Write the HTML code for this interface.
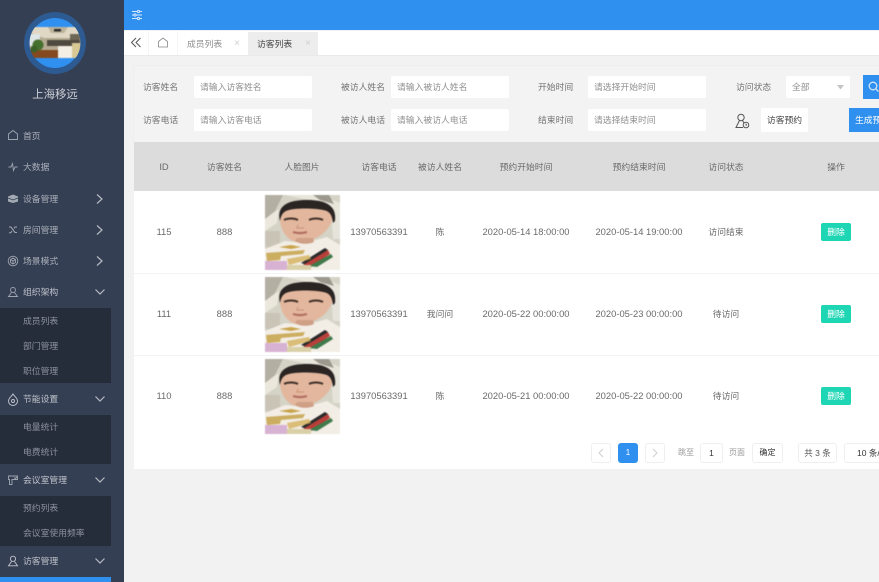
<!DOCTYPE html>
<html lang="zh-CN">
<head>
<meta charset="utf-8">
<title>访客列表</title>
<style>
html,body{margin:0;padding:0}
body{width:879px;height:582px;position:relative;overflow:hidden;background:#f2f2f2;font-family:"Liberation Sans","Noto Sans CJK SC",sans-serif;font-size:8.8px;color:#6a6a6a}
#w{position:absolute;left:0;top:0;width:879px;height:582px;overflow:hidden;filter:blur(.3px)}
.a,.t,.c{position:absolute;white-space:nowrap}
.t{line-height:14px;height:14px;transform:translateY(-7px)}
.c{line-height:14px;height:14px;transform:translate(-50%,-7px)}
.n{font-size:9.4px}
.side{position:absolute;left:0;top:0;width:124px;height:582px;background:#353f53;overflow:hidden}
.sub{position:absolute;left:0;width:111px;background:#262d3a}
.m{color:#aab0ba}
.mb{color:#bfc3cb}
.s{color:#8b929e}
.ico{position:absolute;fill:none;stroke:#9ea5b0;stroke-width:.9}
.inp{position:absolute;background:#fff;border-radius:2px;height:22px;line-height:22px;padding-left:6px;box-sizing:border-box;color:#909090;width:118px}
.lb{color:#737373}
.del{position:absolute;left:821px;width:30px;height:18px;line-height:18px;background:#1fd6b4;color:#fff;text-align:center;border-radius:2px}
.pg{position:absolute;box-sizing:border-box;border:1px solid #efefef;border-radius:3px;background:#fff;text-align:center;height:20px;line-height:18px;top:443px;color:#555}
.photo{position:absolute;left:265px;width:75px;height:75px;filter:blur(.6px)}
</style>
</head>
<body>
<div id="w">

<div class="side">
  <svg class="a" style="left:24px;top:12px" width="62" height="62" viewBox="0 0 62 62">
    <defs><clipPath id="cc"><circle cx="31" cy="31" r="25.500"/></clipPath></defs>
    <circle cx="31" cy="31" r="31" fill="#2d5a90"/>
    <circle cx="31" cy="31" r="25" fill="#3090f0"/>
    <g clip-path="url(#cc)" style="filter:blur(.6px)">
      <rect x="5" y="15" width="52" height="31" fill="#b5aa92"/>
      <polygon points="5,15 57,15 57,22 46,26 20,26 5,20" fill="#e0d8c4"/>
      <polygon points="24,15 44,15 40,21 27,21" fill="#bdb39c"/>
      <rect x="30" y="17" width="7" height="2.500" fill="#2a2a2a"/>
      <rect x="5" y="22" width="11" height="12" fill="#dfe6e8"/>
      <rect x="23" y="28" width="33" height="6" fill="#4f4a40"/>
      <rect x="46" y="22" width="10" height="6" fill="#6e6757"/>
      <rect x="5" y="38" width="30" height="8" fill="#84491f"/>
      <circle cx="14" cy="33" r="5.500" fill="#46702e"/>
      <circle cx="10" cy="37" r="3.500" fill="#3a6228"/>
      <rect x="34" y="34" width="14" height="12" fill="#f4efe4"/>
      <rect x="48" y="31" width="8" height="15" fill="#d8c994"/>
    </g>
  </svg>
  <div class="c" style="left:55px;top:95px;font-size:11.400px;color:#cdd0d6">上海移远</div>

  <svg class="ico" style="left:7px;top:129px" width="12" height="12" viewBox="0 0 12 12"><path d="M1.500 5 6 1.500 10.500 5v5.500h-9z"/></svg>
  <div class="t m" style="left:23px;top:136px">首页</div>

  <svg class="ico" style="left:7px;top:161px" width="12" height="12" viewBox="0 0 12 12"><path d="M1.500 6h2.500L5.500 2.500 6.500 9.500 8 6h2.500"/></svg>
  <div class="t m" style="left:23px;top:167px">大数据</div>

  <svg class="a" style="left:7px;top:193px" width="12" height="11" viewBox="0 0 12 11"><path d="M6 1.500 11 3.500v5L6 10 1 8.500V3.500z" fill="#a4aab4"/><path d="M1 5 6 7 11 5" fill="none" stroke="#353f53" stroke-width=".8"/></svg>
  <div class="t m" style="left:23px;top:198.500px">设备管理</div>
  <svg class="ico" style="left:94px;top:193px;stroke-width:1.200;stroke:#b5bac3" width="10" height="12" viewBox="0 0 10 12"><path d="M3 1.500 8 6l-5 4.500"/></svg>

  <svg class="ico" style="left:7px;top:224px;stroke-width:1.100" width="12" height="12" viewBox="0 0 12 12"><path d="M2 3h2l4 5.500h2M2 9l2-.5 1-1.500M7 4.500 8 3h2"/></svg>
  <div class="t m" style="left:23px;top:230px">房间管理</div>
  <svg class="ico" style="left:94px;top:224px;stroke-width:1.200;stroke:#b5bac3" width="10" height="12" viewBox="0 0 10 12"><path d="M3 1.500 8 6l-5 4.500"/></svg>

  <svg class="ico" style="left:7px;top:255px" width="12" height="12" viewBox="0 0 12 12"><circle cx="6" cy="6" r="4.800"/><path d="M3.500 4.500 6 3l2.500 1.500v3L6 9 3.500 7.500zM3.500 4.500 6 6l2.500-1.500M6 6v3"/></svg>
  <div class="t m" style="left:23px;top:261px">场景模式</div>
  <svg class="ico" style="left:94px;top:255px;stroke-width:1.200;stroke:#b5bac3" width="10" height="12" viewBox="0 0 10 12"><path d="M3 1.500 8 6l-5 4.500"/></svg>

  <svg class="ico" style="left:7px;top:286px" width="12" height="12" viewBox="0 0 12 12"><circle cx="6" cy="4" r="2.500"/><path d="M4.500 6.500 1.500 10.500h9L7.500 6.500"/></svg>
  <div class="t mb" style="left:23px;top:292px">组织架构</div>
  <svg class="ico" style="left:94px;top:287px;stroke-width:1.200;stroke:#b5bac3" width="12" height="10" viewBox="0 0 12 10"><path d="M1.500 2.500 6 7l4.500-4.500"/></svg>

  <div class="sub" style="top:308px;height:75px"></div>
  <div class="t s" style="left:23px;top:321px">成员列表</div>
  <div class="t s" style="left:23px;top:346px">部门管理</div>
  <div class="t s" style="left:23px;top:371px">职位管理</div>

  <svg class="ico" style="left:7px;top:393px;stroke:#c2c6cd" width="12" height="13" viewBox="0 0 12 13"><path d="M6 1C7 3 10.500 5 10.500 8A4.500 4.500 0 0 1 1.500 8C1.500 5 5 3 6 1z"/><circle cx="6" cy="8" r="1.500"/></svg>
  <div class="t mb" style="left:23px;top:399px">节能设置</div>
  <svg class="ico" style="left:94px;top:394px;stroke-width:1.200;stroke:#b5bac3" width="12" height="10" viewBox="0 0 12 10"><path d="M1.500 2.500 6 7l4.500-4.500"/></svg>

  <div class="sub" style="top:415px;height:49px"></div>
  <div class="t s" style="left:23px;top:427px">电量统计</div>
  <div class="t s" style="left:23px;top:452px">电费统计</div>

  <svg class="ico" style="left:7px;top:474px" width="12" height="12" viewBox="0 0 12 12"><path d="M1.500 2h9v3.500H5V10.500H2.500V5.500h-1z"/><path d="M7 3.500 8.500 4.500 10 3"/></svg>
  <div class="t mb" style="left:23px;top:480px">会议室管理</div>
  <svg class="ico" style="left:94px;top:475px;stroke-width:1.200;stroke:#b5bac3" width="12" height="10" viewBox="0 0 12 10"><path d="M1.500 2.500 6 7l4.500-4.500"/></svg>

  <div class="sub" style="top:496px;height:50px"></div>
  <div class="t s" style="left:23px;top:508px">预约列表</div>
  <div class="t s" style="left:23px;top:533px">会议室使用频率</div>

  <svg class="ico" style="left:7px;top:555px;stroke:#c2c6cd" width="12" height="12" viewBox="0 0 12 12"><circle cx="6" cy="3.800" r="2.600"/><path d="M4.500 6.500 1.500 10.800h9L7.500 6.500"/></svg>
  <div class="t mb" style="left:23px;top:561px">访客管理</div>
  <svg class="ico" style="left:94px;top:556px;stroke-width:1.200;stroke:#b5bac3" width="12" height="10" viewBox="0 0 12 10"><path d="M1.500 2.500 6 7l4.500-4.500"/></svg>

  <div class="a" style="left:0;top:577px;width:111px;height:5px;background:#3090f0"></div>
</div>

<!-- top bar -->
<div class="a" style="left:124px;top:0;width:755px;height:30px;background:#3090f0"></div>
<svg class="a" style="left:131px;top:9px" width="12" height="12" viewBox="0 0 12 12" fill="none" stroke="#d6e8fb" stroke-width="1"><path d="M1 2.500h10M1 6h10M1 9.500h10"/><circle cx="7.500" cy="2.500" r="1.100" fill="#3090f0"/><circle cx="4" cy="6" r="1.100" fill="#3090f0"/><circle cx="7.500" cy="9.500" r="1.100" fill="#3090f0"/></svg>

<!-- tabs -->
<div class="a" style="left:124px;top:31px;width:755px;height:24px;background:#fff;border-bottom:1px solid #e9e9e9"></div>
<svg class="a" style="left:130px;top:37px" width="12" height="11" viewBox="0 0 12 11" fill="none" stroke="#555" stroke-width="1"><path d="M6 1 1.500 5.500 6 10M10.500 1 6 5.500 10.500 10"/></svg>
<div class="a" style="left:148px;top:31px;width:1px;height:24px;background:#f6f6f6"></div>
<svg class="a" style="left:157px;top:37px" width="12" height="11" viewBox="0 0 12 11" fill="none" stroke="#888" stroke-width=".8"><path d="M1.500 4.500 6 1l4.500 3.500V10h-9z"/></svg>
<div class="a" style="left:177px;top:31px;width:1px;height:24px;background:#f6f6f6"></div>
<div class="t" style="left:187px;top:43.500px;color:#8f8f8f">成员列表</div>
<div class="c" style="left:237px;top:43.500px;color:#cfcfcf;font-size:10px">×</div>
<div class="a" style="left:248px;top:32px;width:70px;height:23px;background:#ededed"></div>
<div class="t" style="left:257px;top:43.500px;color:#444">访客列表</div>
<div class="c" style="left:308px;top:43.500px;color:#cfcfcf;font-size:10px">×</div>

<!-- filter panel -->
<div class="a" style="left:134px;top:65px;width:745px;height:77px;background:#f3f3f3;border-top:1px solid #eeeeee;box-sizing:border-box"></div>
<div class="a" style="left:133px;top:65px;width:1px;height:77px;background:#eeeeee"></div>

<div class="t lb" style="left:143px;top:87px">访客姓名</div>
<div class="inp" style="left:194px;top:76px">请输入访客姓名</div>
<div class="t lb" style="left:341px;top:87px">被访人姓名</div>
<div class="inp" style="left:391px;top:76px">请输入被访人姓名</div>
<div class="t lb" style="left:538px;top:87px">开始时间</div>
<div class="inp" style="left:588px;top:76px">请选择开始时间</div>
<div class="t lb" style="left:736px;top:87px">访问状态</div>
<div class="inp" style="left:786px;top:76px;width:64px">全部</div>
<svg class="a" style="left:836px;top:85px" width="9" height="5" viewBox="0 0 9 5"><path d="M1 0h7L4.500 4.500z" fill="#c4c4c4"/></svg>
<div class="a" style="left:863px;top:75px;width:16px;height:24px;background:#3090f0"></div>
<svg class="a" style="left:868px;top:81px" width="11" height="12" viewBox="0 0 11 12" fill="none" stroke="#cfe4fa" stroke-width="1.300"><circle cx="5" cy="5" r="3.800"/><path d="M8 8l2.500 2.500"/></svg>

<div class="t lb" style="left:143px;top:120px">访客电话</div>
<div class="inp" style="left:194px;top:109px">请输入访客电话</div>
<div class="t lb" style="left:341px;top:120px">被访人电话</div>
<div class="inp" style="left:391px;top:109px">请输入被访人电话</div>
<div class="t lb" style="left:538px;top:120px">结束时间</div>
<div class="inp" style="left:588px;top:109px">请选择结束时间</div>
<svg class="a" style="left:735px;top:113px" width="15" height="16" viewBox="0 0 15 16" fill="none" stroke="#555" stroke-width="1"><circle cx="6" cy="4.500" r="3.200"/><path d="M4.500 7.500 1 14.500h7M7.500 7.500l1.500 2.500"/><circle cx="11" cy="12" r="2.800"/><path d="M11 10.800V12h1"/></svg>
<div class="a" style="left:761px;top:108px;width:47px;height:24px;line-height:24px;background:#fff;text-align:center;color:#444;border-radius:2px">访客预约</div>
<div class="a" style="left:849px;top:108px;width:30px;height:24px;line-height:24px;background:#3090f0;color:#fff;padding-left:6px;box-sizing:border-box;overflow:hidden">生成预约</div>

<!-- table -->
<div class="a" style="left:134px;top:142px;width:745px;height:49px;background:#dcdcdc"></div>
<div class="a" style="left:134px;top:191px;width:745px;height:278px;background:#fff"></div>
<div class="a" style="left:134px;top:273px;width:745px;height:1px;background:#f3f3f3"></div>
<div class="a" style="left:134px;top:355px;width:745px;height:1px;background:#f3f3f3"></div>

<div class="c" style="left:164px;top:167px;font-size:9.400px">ID</div>
<div class="c" style="left:224.500px;top:167px">访客姓名</div>
<div class="c" style="left:302px;top:167px">人脸图片</div>
<div class="c" style="left:379px;top:167px">访客电话</div>
<div class="c" style="left:440px;top:167px">被访人姓名</div>
<div class="c" style="left:526px;top:167px">预约开始时间</div>
<div class="c" style="left:639px;top:167px">预约结束时间</div>
<div class="c" style="left:726px;top:167px">访问状态</div>
<div class="c" style="left:836px;top:167px">操作</div>

<svg width="0" height="0" style="position:absolute">
  <defs>
    <g id="face">
      <rect width="75" height="75" fill="#d5d2c6"/>
      <path d="M0 0h18L10 16 0 24z" fill="#b4afa3"/>
      <path d="M0 24 14 14 12 28 0 36z" fill="#ebe7dd"/>
      <path d="M20 0h36l19 8v12L58 6 38 4z" fill="#e8e5db"/>
      <path d="M48 0h16l5 9-14-4z" fill="#9c988e"/>
      <path d="M66 16h9v28H68z" fill="#e6e4da"/>
      <rect x="0" y="36" width="15" height="16" fill="#c9c4b6"/>
      <path d="M0 54 20 46 40 48 62 42 75 50V75H0z" fill="#f2ede5"/>
      <path d="M15 22c0 12 5 19 11 23 4 2.500 12 3 18 1 9-3 21-10 24-24 1-6-3-10-8-10H22c-4 0-7 4-7 10z" fill="#e3b79d"/>
      <path d="M30 46c4 3 12 4 19 1l-1-4H32z" fill="#cf9f86"/>
      <path d="M15 26C11 10 24 5 42 5s30 5 28 21l-2 2c-1-8-3-12-10-13-8-2-28-2-34 0-5 1-8 4-9 11z" fill="#2a2423"/>
      <path d="M19 25c4-2 10-2 14 0M44 25c4-2 10-2 14 0" stroke="#3f302a" stroke-width="2" fill="none"/>
      <path d="M33 30l-1 3h7" stroke="#c9917a" stroke-width="1" fill="none"/>
      <path d="M28 37c4 1.500 10 1.500 14 0" stroke="#b36f62" stroke-width="2.200" fill="none"/>
      <path d="M14 52 26 50 36 52 26 54z" fill="#c9a44c"/>
      <path d="M1 58 40 55 38 59 16 61 15 65 2 66z" fill="#c6a24a" opacity=".85"/>
      <path d="M36 68 60 53 63 55 42 70z" fill="#2a2a2a"/>
      <path d="M38 70 63 55 65 59 46 72z" fill="#b8403a"/>
      <path d="M44 71 66 59 68 62 52 72z" fill="#3f7a4a"/>
      <path d="M22 64 44 60 46 64 24 70z" fill="#d3b05a" opacity=".8"/>
      <rect x="0" y="66" width="22" height="9" fill="#d8b2d2"/>
      <rect x="22" y="70" width="24" height="5" fill="#d9d0a8"/>
    </g>
  </defs>
</svg>

<!-- row 1 -->
<div class="c n" style="left:164px;top:232px">115</div>
<div class="c n" style="left:224.500px;top:232px">888</div>
<svg class="photo" style="top:195px" viewBox="0 0 75 75"><use href="#face"/></svg>
<div class="c n" style="left:379px;top:232px">13970563391</div>
<div class="c" style="left:440px;top:232px">陈</div>
<div class="c n" style="left:526px;top:232px">2020-05-14 18:00:00</div>
<div class="c n" style="left:639px;top:232px">2020-05-14 19:00:00</div>
<div class="c" style="left:726px;top:232px">访问结束</div>
<div class="del" style="top:223px">删除</div>

<!-- row 2 -->
<div class="c n" style="left:164px;top:314px">111</div>
<div class="c n" style="left:224.500px;top:314px">888</div>
<svg class="photo" style="top:277px" viewBox="0 0 75 75"><use href="#face"/></svg>
<div class="c n" style="left:379px;top:314px">13970563391</div>
<div class="c" style="left:440px;top:314px">我问问</div>
<div class="c n" style="left:526px;top:314px">2020-05-22 00:00:00</div>
<div class="c n" style="left:639px;top:314px">2020-05-23 00:00:00</div>
<div class="c" style="left:726px;top:314px">待访问</div>
<div class="del" style="top:305px">删除</div>

<!-- row 3 -->
<div class="c n" style="left:164px;top:396px">110</div>
<div class="c n" style="left:224.500px;top:396px">888</div>
<svg class="photo" style="top:359px" viewBox="0 0 75 75"><use href="#face"/></svg>
<div class="c n" style="left:379px;top:396px">13970563391</div>
<div class="c" style="left:440px;top:396px">陈</div>
<div class="c n" style="left:526px;top:396px">2020-05-21 00:00:00</div>
<div class="c n" style="left:639px;top:396px">2020-05-22 00:00:00</div>
<div class="c" style="left:726px;top:396px">待访问</div>
<div class="del" style="top:387px">删除</div>

<!-- pagination -->
<div class="pg" style="left:591px;width:20px"></div>
<svg class="a" style="left:597px;top:448px" width="8" height="10" viewBox="0 0 8 10" fill="none" stroke="#cfcfcf"><path d="M6 1 2 5l4 4"/></svg>
<div class="pg" style="left:618px;width:20px;background:#3090f0;border-color:#3090f0;color:#fff;font-size:8px">1</div>
<div class="pg" style="left:645px;width:20px"></div>
<svg class="a" style="left:651px;top:448px" width="8" height="10" viewBox="0 0 8 10" fill="none" stroke="#cfcfcf"><path d="M2 1l4 4-4 4"/></svg>
<div class="t" style="left:678px;top:453px;font-size:8px;color:#9a9a9a">跳至</div>
<div class="pg" style="left:700px;width:23px;font-size:8.500px;color:#333">1</div>
<div class="t" style="left:729px;top:453px;font-size:8px;color:#9a9a9a">页面</div>
<div class="pg" style="left:752px;width:31px;font-size:8px;color:#333">确定</div>
<div class="pg" style="left:798px;width:39px;font-size:8.500px">共 3 条</div>
<div class="pg" style="left:844px;width:50px;font-size:8.500px;color:#333;border-right:0;text-align:left;padding-left:12px">10 条/页</div>

</div>
</body>
</html>
